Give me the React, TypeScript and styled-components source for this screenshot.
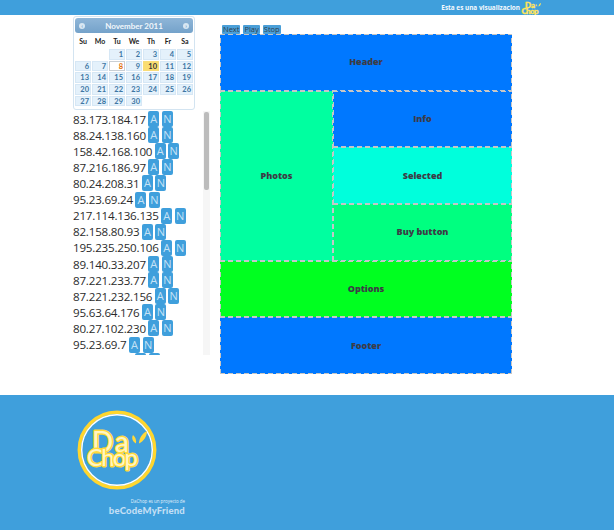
import React from "react";
import styled, { createGlobalStyle } from "styled-components";

const GlobalStyle = createGlobalStyle`
  html, body {
    margin: 0;
    padding: 0;
    background: #fff;
    font-family: "Open Sans", "Noto Sans", sans-serif;
    color: #333;
  }
`;

const Page = styled.div`
  width: 614px;
  height: 530px;
  overflow: hidden;
  display: flex;
  flex-direction: column;
`;

const TopBar = styled.header`
  height: 15px;
  flex: none;
  background: #3f9fdc;
  display: flex;
  justify-content: flex-end;
  align-items: center;
  gap: 1px;
  padding-right: 71px;
`;

const TopText = styled.span`
  color: #f4fafe;
  font-size: 6.4px;
  font-weight: 700;
  white-space: nowrap;
`;

const Content = styled.main`
  display: flex;
  padding-left: 73px;
  height: 380px;
  flex: none;
`;

const Side = styled.aside`
  width: 137px;
  display: flex;
  flex-direction: column;
  gap: 1px;
  padding-top: 1px;
`;

const Calendar = styled.div`
  width: 122px;
  height: 94px;
  box-sizing: border-box;
  border: 1px solid #d3e4f1;
  border-radius: 3px;
  padding: 1px;
  display: flex;
  flex-direction: column;
`;

const CalHeader = styled.div`
  height: 15px;
  flex: none;
  background: linear-gradient(#8fb6d8, #74a2ca);
  border-radius: 3px;
  display: flex;
  justify-content: space-between;
  align-items: center;
  padding: 0 4px;
  color: #f2f7fb;
  font-family: "Lato", sans-serif;
  font-size: 8px;
  font-weight: 700;
`;

const NavDot = styled.span`
  width: 6px;
  height: 6px;
  border-radius: 50%;
  background: #d8e7f3;
  display: flex;
  align-items: center;
  justify-content: center;
  color: #6d9cc6;
  font-size: 6px;
  line-height: 6px;
`;

const CalGrid = styled.div`
  display: grid;
  grid-template-columns: repeat(7, 16px);
  grid-template-rows: 14px repeat(5, 10.7px);
  gap: 1px;
  padding-top: 1px;
  font-family: "Lato", sans-serif;
  font-size: 7.5px;
  font-weight: 700;
`;

const DayName = styled.span`
  color: #222;
  font-size: 7px;
  text-align: center;
  line-height: 14px;
`;

const Day = styled.span<{ $kind?: "today" | "selected"; $start?: number }>`
  box-sizing: border-box;
  grid-column-start: ${(p) => p.$start ?? "auto"};
  border: 1px solid ${(p) => (p.$kind === "today" ? "#f8dc78" : p.$kind === "selected" ? "#c9cfd4" : "#d6e7f5")};
  background: ${(p) => (p.$kind === "today" ? "#fadd72" : p.$kind === "selected" ? "#fff" : "#e4f1fb")};
  color: ${(p) => (p.$kind === "today" ? "#363636" : p.$kind === "selected" ? "#e17009" : "#3d76a3")};
  text-align: right;
  padding-right: 1px;
  line-height: 9px;
`;

const ListWrap = styled.div`
  position: relative;
  width: 137px;
  height: 244px;
`;

const IpList = styled.div`
  height: 100%;
  overflow-y: scroll;
  overflow-x: hidden;
  scrollbar-width: none;
`;

const Track = styled.div`
  position: absolute;
  top: 0;
  right: 0;
  bottom: 0;
  width: 7px;
  background: #f6f6f6;
`;

const Thumb = styled.div`
  margin: 1px 1px 0;
  height: 78px;
  background: #bcbcbc;
  border-radius: 2px;
`;

const IpRow = styled.div`
  height: 16.12px;
  display: flex;
  align-items: center;
  font-size: 11.6px;
  letter-spacing: -0.2px;
  color: #2b2b2b;
  white-space: nowrap;
`;

const TagButton = styled.span`
  width: 11px;
  height: 16px;
  margin-left: 2.5px;
  background: #3f9fdc;
  border-radius: 2px;
  color: #c6e2f6;
  font-size: 11px;
  letter-spacing: 0;
  line-height: 16px;
  text-align: center;
  flex: none;
`;

const Stage = styled.section`
  margin-left: 10px;
  padding-top: 10px;
`;

const Controls = styled.div`
  display: flex;
  gap: 3px;
  height: 9px;
  padding-left: 2px;
`;

const ControlButton = styled.span`
  height: 9px;
  padding: 0 1px;
  background: #4a9fd8;
  border-radius: 1px;
  color: #2c3e4e;
  font-size: 7.5px;
  line-height: 9px;
`;

const Wireframe = styled.div`
  width: 292px;
  height: 340px;
  display: grid;
  grid-template-columns: 113px 179px;
  grid-template-rows: repeat(6, 1fr);
  grid-template-areas:
    "header header"
    "photos info"
    "photos selected"
    "photos buy"
    "options options"
    "footer footer";
`;

const dash = "repeating-linear-gradient";

const Region = styled.div<{ $area: string; $bg: string }>`
  grid-area: ${(p) => p.$area};
  background-color: ${(p) => p.$bg};
  background-image:
    ${dash}(90deg, #c6c6c6 0 5px, transparent 5px 8px),
    ${dash}(90deg, #c6c6c6 0 5px, transparent 5px 8px),
    ${dash}(0deg, #c6c6c6 0 5px, transparent 5px 8px),
    ${dash}(0deg, #c6c6c6 0 5px, transparent 5px 8px);
  background-size: 100% 1px, 100% 1px, 1px 100%, 1px 100%;
  background-position: top, bottom, left, right;
  background-repeat: no-repeat;
  display: flex;
  align-items: center;
  justify-content: center;
  color: #3c3c46;
  font-size: 9px;
  font-weight: 800;
  padding-bottom: 1px;
  box-sizing: border-box;
`;

const Footer = styled.footer`
  flex: 1;
  background: #3f9fdc;
  padding: 15px 0 0 77px;
  display: flex;
  flex-direction: column;
`;

const LogoSvg = styled.svg`
  display: block;
`;

const Credit = styled.div`
  width: 108px;
  margin-top: 8px;
  text-align: right;
`;

const CreditSmall = styled.div`
  color: #e3f1fb;
  font-size: 4.4px;
  line-height: 7px;
`;

const CreditBrand = styled.div`
  color: #c3dff5;
  font-family: "Lato", sans-serif;
  font-size: 9.5px;
  font-weight: 900;
  line-height: 11px;
  letter-spacing: 0.2px;
`;

const weeks = ["Su", "Mo", "Tu", "We", "Th", "Fr", "Sa"];
const days = Array.from({ length: 30 }, (_, i) => i + 1);

const ips = [
  "83.173.184.17",
  "88.24.138.160",
  "158.42.168.100",
  "87.216.186.97",
  "80.24.208.31",
  "95.23.69.24",
  "217.114.136.135",
  "82.158.80.93",
  "195.235.250.106",
  "89.140.33.207",
  "87.221.233.77",
  "87.221.232.156",
  "95.63.64.176",
  "80.27.102.230",
  "95.23.69.7",
  "81.45.12.90",
];

const regions = [
  { area: "header", bg: "#0078ff", label: "Header" },
  { area: "photos", bg: "#00ffa0", label: "Photos" },
  { area: "info", bg: "#0078ff", label: "Info" },
  { area: "selected", bg: "#00ffdc", label: "Selected" },
  { area: "buy", bg: "#00ff80", label: "Buy button" },
  { area: "options", bg: "#00ff20", label: "Options" },
  { area: "footer", bg: "#0078ff", label: "Footer" },
];

const Logo = () => (
  <LogoSvg width="80" height="80" viewBox="0 0 80 80">
    <circle cx="40" cy="40" r="37.7" fill="#3f9fdc" stroke="#ffd62e" strokeWidth="3.500" />
    <circle cx="40" cy="40" r="35.300" fill="none" stroke="#fff" strokeWidth="1.400" />
    <g
      fontFamily="Lato, sans-serif"
      fontWeight="400"
      fill="#fff6c4"
      stroke="#ffd93b"
      strokeWidth="2.800"
      strokeLinejoin="round"
      paintOrder="stroke"
    >
      <text x="15" y="42" fontSize="28" textLength="37">Da</text>
      <text x="10" y="56" fontSize="24" textLength="51">Chop</text>
    </g>
    <path d="M56 25c2.500 2 3.500 5 3 8.500-3-1.500-5-5-3-8.500z" fill="#ffd93b" />
    <path d="M70 21c0 5-3 10-8 12.500 0-5 3-10 8-12.500z" fill="#ffd93b" />
  </LogoSvg>
);

const MiniLogo = () => (
  <svg width="22" height="14" viewBox="0 0 22 14">
    <g
      fontFamily="Lato, sans-serif"
      fontWeight="900"
      fill="#ffe45c"
      stroke="#ffe45c"
      strokeWidth="0.400"
    >
      <text x="4" y="7" fontSize="8">Da</text>
      <text x="0.500" y="13" fontSize="8" textLength="17">Chop</text>
    </g>
    <path d="M15 3c1 .6 1.400 1.500 1.200 2.600-1-.4-1.600-1.500-1.200-2.600z" fill="#ffe45c" />
    <path d="M20 2c0 1.500-1 3-2.500 3.600 0-1.500 1-3 2.500-3.600z" fill="#ffe45c" />
  </svg>
);

export default function App() {
  return (
    <Page>
      <GlobalStyle />
      <TopBar>
        <TopText>Esta es una visualizacion</TopText>
        <MiniLogo />
      </TopBar>
      <Content>
        <Side>
          <Calendar>
            <CalHeader>
              <NavDot>‹</NavDot>
              November 2011
              <NavDot>›</NavDot>
            </CalHeader>
            <CalGrid>
              {weeks.map((w) => (
                <DayName key={w}>{w}</DayName>
              ))}
              {days.map((d) => (
                <Day
                  key={d}
                  $start={d === 1 ? 3 : undefined}
                  $kind={d === 10 ? "today" : d === 8 ? "selected" : undefined}
                >
                  {d}
                </Day>
              ))}
            </CalGrid>
          </Calendar>
          <ListWrap>
            <IpList>
              {ips.map((ip) => (
                <IpRow key={ip}>
                  {ip}
                  <TagButton>A</TagButton>
                  <TagButton>N</TagButton>
                </IpRow>
              ))}
            </IpList>
            <Track>
              <Thumb />
            </Track>
          </ListWrap>
        </Side>
        <Stage>
          <Controls>
            <ControlButton>Next</ControlButton>
            <ControlButton>Play</ControlButton>
            <ControlButton>Stop</ControlButton>
          </Controls>
          <Wireframe>
            {regions.map((r) => (
              <Region key={r.area} $area={r.area} $bg={r.bg}>
                {r.label}
              </Region>
            ))}
          </Wireframe>
        </Stage>
      </Content>
      <Footer>
        <Logo />
        <Credit>
          <CreditSmall>DaChop es un proyecto de</CreditSmall>
          <CreditBrand>beCodeMyFriend</CreditBrand>
        </Credit>
      </Footer>
    </Page>
  );
}
